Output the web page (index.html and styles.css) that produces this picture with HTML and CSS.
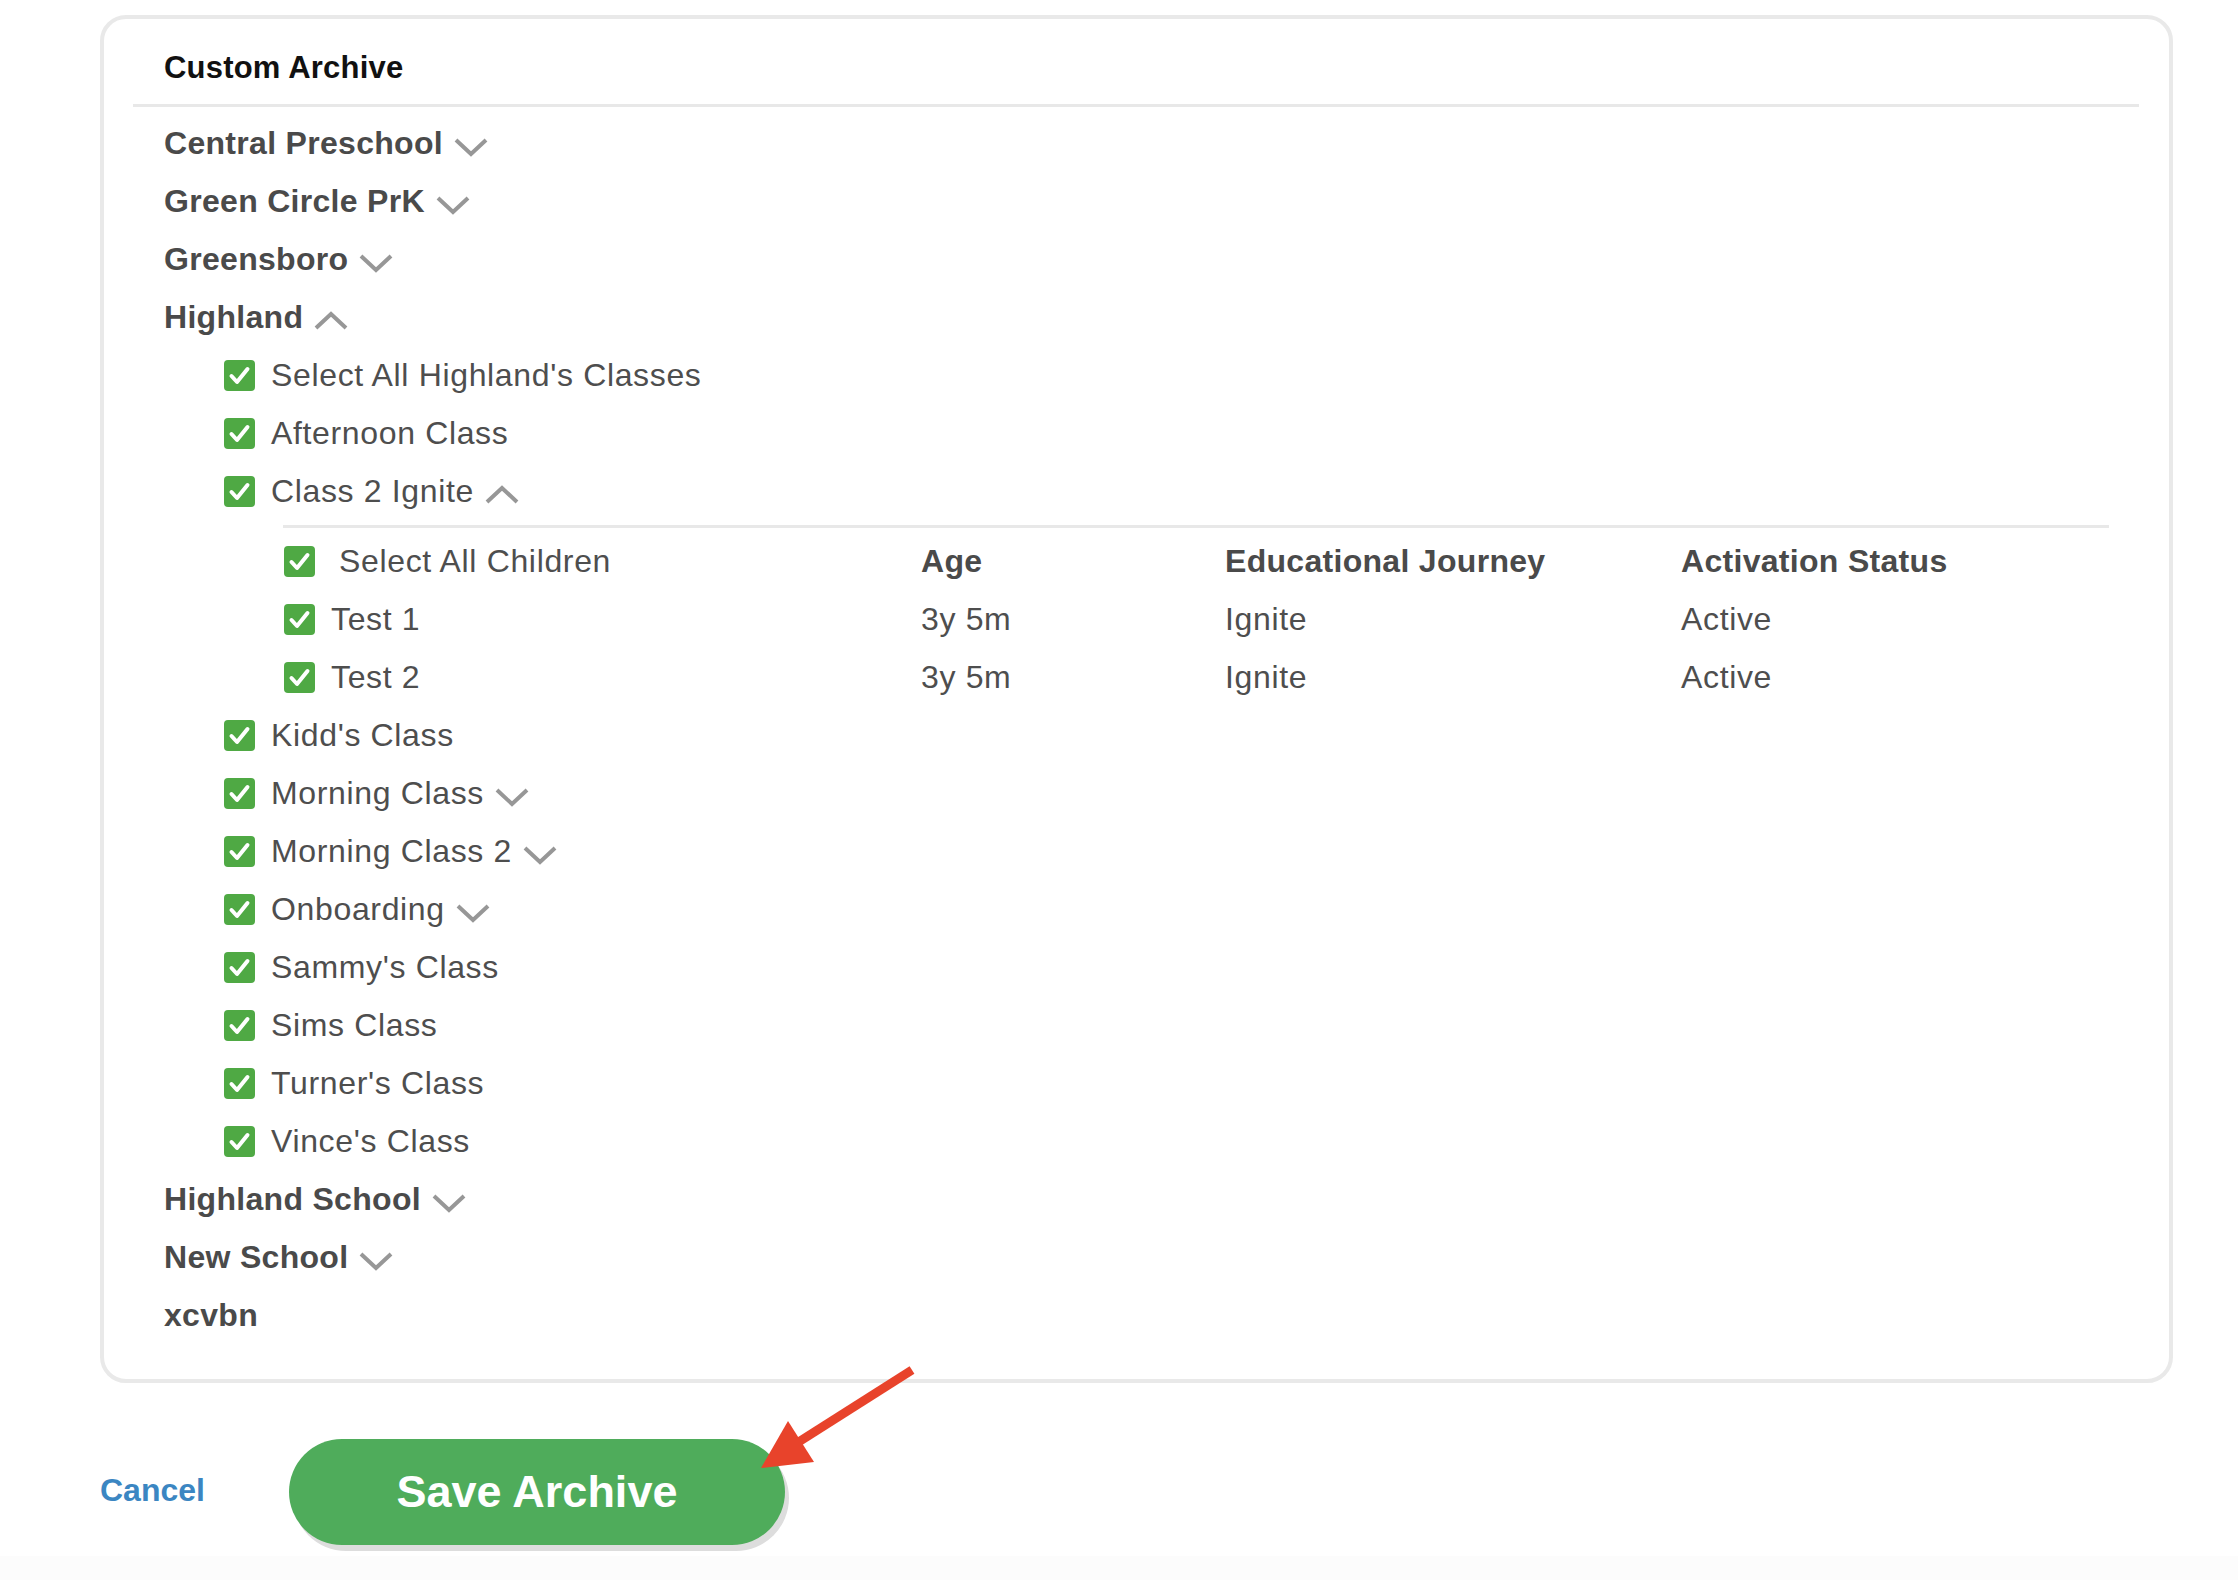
FILE: index.html
```html
<!DOCTYPE html>
<html lang="en">
<head>
<meta charset="utf-8">
<title>Custom Archive</title>
<link rel="stylesheet" href="styles.css">
</head>
<body>
<div class="page">
  <section class="card">
    <header class="card-head"><h2 class="card-title">Custom Archive</h2></header>
    <div class="tree">
      <div class="row school"><span>Central Preschool</span><svg class="chev" viewBox="0 0 34 20"><path d="M2 3 L17 17 L32 3"/></svg></div>
      <div class="row school"><span>Green Circle PrK</span><svg class="chev" viewBox="0 0 34 20"><path d="M2 3 L17 17 L32 3"/></svg></div>
      <div class="row school"><span>Greensboro</span><svg class="chev" viewBox="0 0 34 20"><path d="M2 3 L17 17 L32 3"/></svg></div>
      <div class="row school"><span>Highland</span><svg class="chev" viewBox="0 0 34 20"><path d="M2 17 L17 3 L32 17"/></svg></div>
      <div class="classes">
        <div class="row cls"><svg class="cb" viewBox="0 0 31 31"><rect width="31" height="31" rx="4"/><path d="M7.5 16 L13 22 L23.5 9"/></svg><span>Select All Highland's Classes</span></div>
        <div class="row cls"><svg class="cb" viewBox="0 0 31 31"><rect width="31" height="31" rx="4"/><path d="M7.5 16 L13 22 L23.5 9"/></svg><span>Afternoon Class</span></div>
        <div class="row cls"><svg class="cb" viewBox="0 0 31 31"><rect width="31" height="31" rx="4"/><path d="M7.5 16 L13 22 L23.5 9"/></svg><span>Class 2 Ignite</span><svg class="chev" viewBox="0 0 34 20"><path d="M2 17 L17 3 L32 17"/></svg></div>
        <div class="children">
          <div class="crow head">
            <div class="cname"><svg class="cb" viewBox="0 0 31 31"><rect width="31" height="31" rx="4"/><path d="M7.5 16 L13 22 L23.5 9"/></svg><span class="all">Select All Children</span></div>
            <div class="th">Age</div>
            <div class="th">Educational Journey</div>
            <div class="th">Activation Status</div>
          </div>
          <div class="crow">
            <div class="cname"><svg class="cb" viewBox="0 0 31 31"><rect width="31" height="31" rx="4"/><path d="M7.5 16 L13 22 L23.5 9"/></svg><span>Test 1</span></div>
            <div>3y 5m</div><div>Ignite</div><div>Active</div>
          </div>
          <div class="crow">
            <div class="cname"><svg class="cb" viewBox="0 0 31 31"><rect width="31" height="31" rx="4"/><path d="M7.5 16 L13 22 L23.5 9"/></svg><span>Test 2</span></div>
            <div>3y 5m</div><div>Ignite</div><div>Active</div>
          </div>
        </div>
        <div class="row cls"><svg class="cb" viewBox="0 0 31 31"><rect width="31" height="31" rx="4"/><path d="M7.5 16 L13 22 L23.5 9"/></svg><span>Kidd's Class</span></div>
        <div class="row cls"><svg class="cb" viewBox="0 0 31 31"><rect width="31" height="31" rx="4"/><path d="M7.5 16 L13 22 L23.5 9"/></svg><span>Morning Class</span><svg class="chev" viewBox="0 0 34 20"><path d="M2 3 L17 17 L32 3"/></svg></div>
        <div class="row cls"><svg class="cb" viewBox="0 0 31 31"><rect width="31" height="31" rx="4"/><path d="M7.5 16 L13 22 L23.5 9"/></svg><span>Morning Class 2</span><svg class="chev" viewBox="0 0 34 20"><path d="M2 3 L17 17 L32 3"/></svg></div>
        <div class="row cls"><svg class="cb" viewBox="0 0 31 31"><rect width="31" height="31" rx="4"/><path d="M7.5 16 L13 22 L23.5 9"/></svg><span>Onboarding</span><svg class="chev" viewBox="0 0 34 20"><path d="M2 3 L17 17 L32 3"/></svg></div>
        <div class="row cls"><svg class="cb" viewBox="0 0 31 31"><rect width="31" height="31" rx="4"/><path d="M7.5 16 L13 22 L23.5 9"/></svg><span>Sammy's Class</span></div>
        <div class="row cls"><svg class="cb" viewBox="0 0 31 31"><rect width="31" height="31" rx="4"/><path d="M7.5 16 L13 22 L23.5 9"/></svg><span>Sims Class</span></div>
        <div class="row cls"><svg class="cb" viewBox="0 0 31 31"><rect width="31" height="31" rx="4"/><path d="M7.5 16 L13 22 L23.5 9"/></svg><span>Turner's Class</span></div>
        <div class="row cls"><svg class="cb" viewBox="0 0 31 31"><rect width="31" height="31" rx="4"/><path d="M7.5 16 L13 22 L23.5 9"/></svg><span>Vince's Class</span></div>
      </div>
      <div class="row school"><span>Highland School</span><svg class="chev" viewBox="0 0 34 20"><path d="M2 3 L17 17 L32 3"/></svg></div>
      <div class="row school"><span>New School</span><svg class="chev" viewBox="0 0 34 20"><path d="M2 3 L17 17 L32 3"/></svg></div>
      <div class="row school"><span>xcvbn</span></div>
    </div>
  </section>
  <div class="actions">
    <a class="cancel" href="#">Cancel</a>
    <button class="save" type="button">Save Archive</button>
  </div>
  <div class="footer-band"></div>
  <svg class="callout" viewBox="0 0 165 115" aria-hidden="true">
    <line x1="157" y1="10" x2="42" y2="83"/>
    <polygon points="6,108 33,61 59,102"/>
  </svg>
</div>
</body>
</html>
```

FILE: styles.css
```css
* { box-sizing: border-box; }

html, body {
  margin: 0;
  padding: 0;
  background: #ffffff;
}

body {
  font-family: "Liberation Sans", Arial, sans-serif;
  color: #4b4b4b;
}

.page {
  position: relative;
  padding-top: 15px;
  min-height: 1580px;
}

.card {
  margin-left: 100px;
  width: 2073px;
  height: 1368px;
  border: 4px solid #e9e9e9;
  border-radius: 26px;
  background: #fff;
}

.card-head {
  margin: 0 30px 0 29px;
  padding: 31px 0 18px 31px;
  border-bottom: 3px solid #e8e8e8;
}

.card-title {
  margin: 0;
  font-size: 31px;
  line-height: 36px;
  font-weight: 700;
  letter-spacing: 0.2px;
  color: #111;
}

.tree {
  padding: 7px 0 36px 60px;
}

.row {
  display: flex;
  align-items: center;
  height: 58px;
  font-size: 32px;
}

.school {
  font-weight: 700;
  letter-spacing: 0.3px;
  color: #4a4a4a;
}

.cls {
  color: #4e4e4e;
  letter-spacing: 0.65px;
}

.classes {
  padding-left: 60px;
}

.cb {
  width: 31px;
  height: 31px;
  flex: none;
  margin-right: 16px;
}

.cb rect { fill: #4fa944; }
.cb path {
  fill: none;
  stroke: #fff;
  stroke-width: 4;
  stroke-linecap: round;
  stroke-linejoin: round;
}

.chev {
  width: 34px;
  height: 20px;
  flex: none;
  margin-left: 11px;
  margin-top: 7px;
}

.chev path {
  fill: none;
  stroke: #979797;
  stroke-width: 4;
}

.children {
  margin: 5px 0 0 59px;
  width: 1826px;
  border-top: 3px solid #e8e8e8;
  padding-top: 4px;
}

.crow {
  display: grid;
  grid-template-columns: 638px 304px 456px 1fr;
  align-items: center;
  height: 58px;
  font-size: 32px;
  letter-spacing: 0.65px;
  color: #4e4e4e;
}

.cname {
  display: flex;
  align-items: center;
}

.cname .cb { margin-left: 1px; }
.cname .all { margin-left: 8px; }

.th {
  font-weight: 700;
  letter-spacing: 0.3px;
  color: #4a4a4a;
}

.actions {
  display: flex;
  align-items: center;
  margin: 56px 0 0 100px;
}

.cancel {
  font-size: 32px;
  font-weight: 700;
  color: #3b86c2;
  text-decoration: none;
  margin-right: 84px;
  margin-top: -4px;
}

.save {
  width: 496px;
  height: 106px;
  border: none;
  border-radius: 53px;
  background: #4fac5b;
  color: #fff;
  font-family: "Liberation Sans", Arial, sans-serif;
  font-size: 45px;
  font-weight: 700;
  box-shadow: 4px 6px 0 #dddddd;
  padding: 0;
}

.footer-band {
  margin-top: 11px;
  height: 24px;
  background: #fcfcfc;
}

.callout {
  position: absolute;
  left: 755px;
  top: 1360px;
  width: 165px;
  height: 115px;
}

.callout line {
  stroke: #e8432b;
  stroke-width: 9;
}

.callout polygon {
  fill: #e8432b;
}
```
